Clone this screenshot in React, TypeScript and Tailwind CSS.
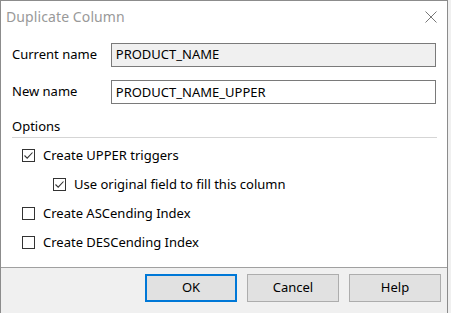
import React, { useState } from "react";

const font = { fontFamily: '"Noto Sans", "Open Sans", Arial, sans-serif' };

const Check = ({
  checked,
  onChange,
  label,
}: {
  checked: boolean;
  onChange: () => void;
  label: string;
}) => (
  <label className="flex items-center h-[29px] cursor-default select-none" onClick={onChange}>
    <span className="w-[13px] h-[13px] border border-[#333333] bg-white flex items-center justify-center">
      {checked && (
        <svg width="11" height="11" viewBox="0 0 11 11">
          <path d="M1.5 5.5 L4.2 8.2 L9.5 2.5" fill="none" stroke="#333333" strokeWidth="1.1" />
        </svg>
      )}
    </span>
    <span className="ml-[8px] text-[13px] text-black">{label}</span>
  </label>
);

export default function App() {
  const [upper, setUpper] = useState(true);
  const [useOriginal, setUseOriginal] = useState(true);
  const [asc, setAsc] = useState(false);
  const [desc, setDesc] = useState(false);

  return (
    <div className="w-[451px] h-[313px] bg-[#f0f0f0] overflow-hidden" style={font}>
      <div className="w-[448px] h-[313px] border-l border-t border-r border-[#8c8c8c] bg-white flex flex-col">
        {/* title bar */}
        <div className="h-[31px] flex items-center justify-between pl-[5px] pr-[10px]">
          <span className="text-[14px] text-[#999999] tracking-[0.1px]">Duplicate Column</span>
          <svg width="12" height="12" viewBox="0 0 12 12">
            <path d="M0.5 0.5 L11.5 11.5 M11.5 0.5 L0.5 11.5" stroke="#777777" strokeWidth="1" />
          </svg>
        </div>

        <div className="flex-1 px-[11px] pt-[11px]">
          <div className="flex items-center">
            <span className="w-[99px] text-[13px] text-black">Current name</span>
            <div className="w-[326px] h-[24px] border border-[#7a7a7a] bg-[#f0f0f0] flex items-center px-[4px] text-[13px] text-black">
              PRODUCT_NAME
            </div>
          </div>
          <div className="flex items-center mt-[13px]">
            <span className="w-[99px] text-[13px] text-black">New name</span>
            <input
              className="w-[326px] h-[24px] border border-[#7a7a7a] bg-white px-[4px] text-[13px] text-black outline-none"
              defaultValue="PRODUCT_NAME_UPPER"
            />
          </div>

          <div className="mt-[13px] text-[13px] text-black leading-[18px]">Options</div>
          <div className="mt-[2px] h-px w-[425px] bg-[#d5d5d5]" />

          <div className="mt-[3px] pl-[10px]">
            <Check checked={upper} onChange={() => setUpper(!upper)} label="Create UPPER triggers" />
            <div className="pl-[31px]">
              <Check
                checked={useOriginal}
                onChange={() => setUseOriginal(!useOriginal)}
                label="Use original field to fill this column"
              />
            </div>
            <Check checked={asc} onChange={() => setAsc(!asc)} label="Create ASCending Index" />
            <Check checked={desc} onChange={() => setDesc(!desc)} label="Create DESCending Index" />
          </div>
        </div>

        {/* footer */}
        <div className="h-[46px] border-t border-[#a0a0a0] bg-[#f0f0f0] flex justify-end gap-[10px] pt-[6px] pr-[6px]">
          <button className="w-[92px] h-[28px] border-2 border-[#0078d7] bg-[#e1e1e1] text-[13px] text-black">
            OK
          </button>
          <button className="w-[92px] h-[28px] border border-[#adadad] bg-[#e1e1e1] text-[13px] text-black">
            Cancel
          </button>
          <button className="w-[92px] h-[28px] border border-[#adadad] bg-[#e1e1e1] text-[13px] text-black">
            Help
          </button>
        </div>
      </div>
    </div>
  );
}
